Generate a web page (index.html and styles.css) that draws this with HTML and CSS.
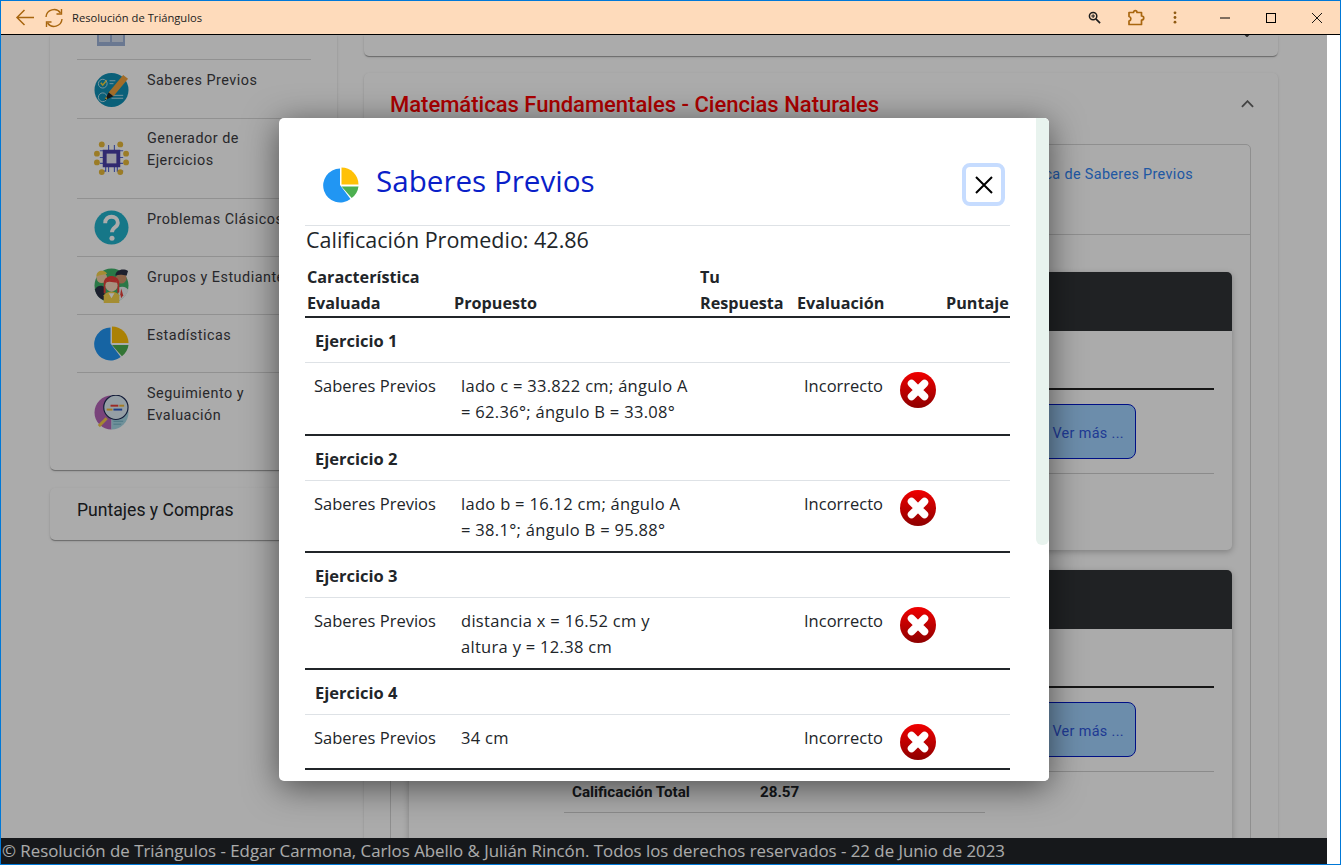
FILE: index.html
```html
<!DOCTYPE html>
<html lang="es">
<head>
<meta charset="utf-8">
<title>Resolución de Triángulos</title>
<link rel="stylesheet" href="styles.css">
</head>
<body>
<div class="window">
  <header class="titlebar">
    <svg class="tb-icon back" viewBox="0 0 20 20"><path d="M19 9.500H2M9.500 2L2 9.500L9.500 17" fill="none" stroke="#a8660f" stroke-width="1.500"/></svg>
    <svg class="tb-icon refresh" viewBox="0 0 20 20"><path d="M2 9A8 8 0 0 1 16.500 5M18 11A8 8 0 0 1 3.500 15" fill="none" stroke="#a8660f" stroke-width="1.400"/><path d="M17.500 1V6H12.500M2.500 19V14H7.500" fill="none" stroke="#a8660f" stroke-width="1.400"/></svg>
    <span class="tb-title">Resolución de Triángulos</span>
    <span class="tb-spacer"></span>
    <svg class="tb-zoom" viewBox="0 0 14 14"><circle cx="5.500" cy="5.500" r="4" fill="none" stroke="#1c1c1c" stroke-width="1.600"/><path d="M8.500 8.500L13 13" stroke="#1c1c1c" stroke-width="1.800"/><path d="M3.500 5.500H7.500M5.500 3.500V7.500" stroke="#1c1c1c" stroke-width="1.100"/></svg>
    <svg class="tb-puzzle" viewBox="0 0 18 18"><path d="M2 3.500H6.500C6.500 1 10 1 10 3.500H14.500V7C17.500 7 17.500 11 14.500 11V15.500H2V12C4.500 11.500 4.500 8 2 7.500Z" fill="none" stroke="#a8660f" stroke-width="1.700" stroke-linejoin="round"/></svg>
    <svg class="tb-dots" viewBox="0 0 4 14"><circle cx="2" cy="2" r="1.500" fill="#8f5a12"/><circle cx="2" cy="7" r="1.500" fill="#8f5a12"/><circle cx="2" cy="12" r="1.500" fill="#8f5a12"/></svg>
    <svg class="tb-min" viewBox="0 0 10 10"><path d="M0 5H10" stroke="#000" stroke-width="1"/></svg>
    <svg class="tb-max" viewBox="0 0 10 10"><rect x=".5" y=".5" width="9" height="9" fill="none" stroke="#000" stroke-width="1"/></svg>
    <svg class="tb-close" viewBox="0 0 10 10"><path d="M0 0L10 10M10 0L0 10" stroke="#000" stroke-width=".9"/></svg>
  </header>

  <div class="viewport">
    <div class="page">
      <div class="columns">
        <aside class="sidebar">
          <section class="side-card">
            <div class="row row-first">
              <svg class="row-icon" viewBox="0 0 30 30"><rect x="1" y="2" width="28" height="26" fill="#9fb3d8"/><rect x="3" y="4" width="11" height="20" fill="#d6dfee"/><rect x="16" y="4" width="11" height="20" fill="#d6dfee"/><path d="M5 8H12M5 12H12M5 16H12M18 8H25M18 12H25M18 16H25" stroke="#8a9dc3"/></svg>
            </div>
            <div class="row row-saberes">
              <svg class="row-icon" viewBox="0 0 36 36"><circle cx="18" cy="18.500" r="17.500" fill="#0f8fb5"/><path d="M7 11l2 2.500 4-5" fill="none" stroke="#f5d33a" stroke-width="1.600"/><circle cx="9" cy="12" r="4.500" fill="none" stroke="#b6e0ea"/><circle cx="9" cy="26" r="4.500" fill="none" stroke="#b6e0ea"/><path d="M17 24H30M18 27H30M16 9H22M16 12H20" stroke="#b6e0ea"/><path d="M15 21L30 3L35 7L20 25Z" fill="#f0a23c"/><path d="M15 21L20 25L11 29Z" fill="#222"/><circle cx="12.500" cy="27" r="1" fill="#f5d33a"/></svg>
              <span class="row-text">Saberes Previos</span>
            </div>
            <div class="row row-two">
              <svg class="row-icon" viewBox="0 0 36 36"><g stroke="#5a6ed6" stroke-width="1.200" fill="none"><path d="M6 10H12V12M6 17H11M6 23H11M6 31H12V26M30 10H24V12M30 17H25M30 23H25M30 31H24V26M15 4V10M21 4V10M15 26V32M21 26V32"/></g><g fill="#e8b93a"><circle cx="8" cy="3.500" r="3"/><circle cx="27" cy="3.500" r="3"/><circle cx="3" cy="13" r="3"/><circle cx="33" cy="13" r="3"/><circle cx="3" cy="22" r="3"/><circle cx="33" cy="22" r="3"/><circle cx="8" cy="32" r="3"/><circle cx="27" cy="32" r="3"/></g><rect x="9" y="9" width="18" height="18" fill="#4a3fa8"/><rect x="13" y="13" width="10" height="10" fill="#e8e8f4"/></svg>
              <span class="row-text">Generador de<br>Ejercicios</span>
            </div>
            <div class="row">
              <svg class="row-icon" viewBox="0 0 36 36"><circle cx="18" cy="18" r="17.500" fill="#22b2cb"/><path d="M11.500 13.500C11.500 4.500 24.500 5 24.500 13C24.500 18 18.500 17.500 18.500 23" fill="none" stroke="#fff" stroke-width="4"/><circle cx="18.500" cy="29" r="2.600" fill="#fff"/></svg>
              <span class="row-text">Problemas Clásicos</span>
            </div>
            <div class="row">
              <svg class="row-icon" viewBox="0 0 36 36"><circle cx="18" cy="18" r="17.500" fill="#3fb36a"/><path d="M1 22C4 17 9 18 11 20V33C6 32 2 28 1 22Z" fill="#2b3145"/><circle cx="8" cy="10" r="5.500" fill="#f7cfa6"/><path d="M2.500 9C2 2 11 1 13.500 6C9 7.500 6 7 2.500 9Z" fill="#f5d24d"/><path d="M25 20C30 18 34 20 35.500 23C33 29 30 32 25 34Z" fill="#eef2f5"/><path d="M28 21L30 28L28 31L27 27Z" fill="#e8403a"/><circle cx="28" cy="10.500" r="5.500" fill="#d0936a"/><path d="M22 8C22 2 30 0 35 3L33.500 8C29 7 26 6.500 22 8Z" fill="#2d3145"/><path d="M10 36V28C14 23 22 23 26 28V36Z" fill="#f5d24d"/><path d="M15 26H21L18 31Z" fill="#fff"/><path d="M10 26V15C11 6 25 6 26 15V25L24 26V16C20 16 15 14 12 16V26Z" fill="#ea3f3a"/><circle cx="18" cy="18" r="6.300" fill="#f9d8bd"/><path d="M12 15C14 10 22 10 24 15C20 15 16 13 12 15Z" fill="#ea3f3a"/></svg>
              <span class="row-text">Grupos y Estudiantes</span>
            </div>
            <div class="row">
              <svg class="row-icon" viewBox="0 0 36 36"><path d="M17 1.500A17 17 0 1 0 27.500 32L17 18Z" fill="#2196f3"/><path d="M18.500 0.500A17 17 0 0 1 35.500 17.500H18.500Z" fill="#ffc107"/><path d="M18.500 19.500H35.500A17 17 0 0 1 28.700 31Z" fill="#4caf50"/></svg>
              <span class="row-text">Estadísticas</span>
            </div>
            <div class="row row-last">
              <svg class="row-icon" viewBox="0 0 36 36"><path d="M18 .500A17.500 17.500 0 0 0 18 35.500Z" fill="#b565b8"/><path d="M18 .500A17.500 17.500 0 0 1 18 35.500Z" fill="#a6d8e6"/><path d="M20 27H30M20 30H28" stroke="#6fb0c4"/><circle cx="22.500" cy="12.700" r="12.500" fill="#dfeef6" stroke="#1c2a55" stroke-width="1.200"/><rect x="17" y="10" width="8" height="2" fill="#e8403a"/><rect x="26" y="10" width="5" height="2" fill="#f5b93a"/><rect x="13" y="14" width="6" height="2" fill="#f5b93a"/><rect x="20" y="14" width="9" height="2" fill="#2f5cc8"/><path d="M5 32L13 24" stroke="#f5c94a" stroke-width="3"/></svg>
              <span class="row-text">Seguimiento y<br>Evaluación</span>
            </div>
          </section>
          <section class="side-card side-single">Puntajes y Compras</section>
        </aside>

        <main class="main">
          <section class="acc acc-top">
            <svg class="acc-chev" viewBox="0 0 14 8"><path d="M1 1L7 7L13 1" fill="none" stroke="#444" stroke-width="2"/></svg>
          </section>
          <section class="acc">
            <div class="acc-head">
              <h2 class="acc-title">Matemáticas Fundamentales - Ciencias Naturales</h2>
              <svg class="acc-chev-up" viewBox="0 0 14 8"><path d="M1 7L7 1L13 7" fill="none" stroke="#666" stroke-width="2"/></svg>
            </div>
            <div class="box">
              <div class="box-tabs"><a class="tab-link">Estadística de Saberes Previos</a></div>
              <div class="box-body">
                <article class="panel">
                  <div class="panel-head"></div>
                  <div class="panel-rule"></div>
                  <div class="panel-action"><button class="more">Ver más ...</button></div>
                  <div class="panel-line"></div>
                  <div class="total"><b>Calificación Total</b><b>28.57</b></div>
                </article>
                <article class="panel">
                  <div class="panel-head"></div>
                  <div class="panel-rule"></div>
                  <div class="panel-action"><button class="more">Ver más ...</button></div>
                  <div class="panel-line"></div>
                  <div class="total"><b>Calificación Total</b><b>28.57</b></div>
                </article>
              </div>
            </div>
          </section>
        </main>
      </div>
      <footer class="footer">© Resolución de Triángulos - Edgar Carmona, Carlos Abello &amp; Julián Rincón. Todos los derechos reservados - 22 de Junio de 2023</footer>

      <div class="backdrop"></div>

      <div class="modal">
        <div class="modal-inner">
          <div class="modal-head">
            <svg class="modal-icon" viewBox="0 0 36 36"><path d="M17 1.500A17 17 0 1 0 27.500 32L17 18Z" fill="#2196f3"/><path d="M18.500 0.500A17 17 0 0 1 35.500 17.500H18.500Z" fill="#ffc107"/><path d="M18.500 19.500H35.500A17 17 0 0 1 28.700 31Z" fill="#4caf50"/></svg>
            <h1 class="modal-title">Saberes Previos</h1>
            <button class="modal-close"><svg viewBox="0 0 18 18"><path d="M1 1L17 17M17 1L1 17" stroke="#000" stroke-width="2"/></svg></button>
          </div>
          <div class="avg">Calificación Promedio: 42.86</div>
          <table class="grades">
            <colgroup><col class="c1"><col class="c2"><col class="c3"><col class="c4"><col class="c5"></colgroup>
            <thead>
              <tr><th>Característica Evaluada</th><th>Propuesto</th><th>Tu Respuesta</th><th>Evaluación</th><th>Puntaje</th></tr>
            </thead>
            <tbody>
              <tr class="ex"><td colspan="5">Ejercicio 1</td></tr>
              <tr class="an"><td>Saberes Previos</td><td>lado c = 33.822 cm; ángulo A = 62.36°; ángulo B = 33.08°</td><td></td><td class="eval">Incorrecto<svg class="bad" viewBox="0 0 36 36"><use href="#x-mark"/></svg></td><td></td></tr>
              <tr class="ex"><td colspan="5">Ejercicio 2</td></tr>
              <tr class="an"><td>Saberes Previos</td><td>lado b = 16.12 cm; ángulo A = 38.1°; ángulo B = 95.88°</td><td></td><td class="eval">Incorrecto<svg class="bad" viewBox="0 0 36 36"><use href="#x-mark"/></svg></td><td></td></tr>
              <tr class="ex"><td colspan="5">Ejercicio 3</td></tr>
              <tr class="an"><td>Saberes Previos</td><td>distancia x = 16.52 cm y altura y = 12.38 cm</td><td></td><td class="eval">Incorrecto<svg class="bad" viewBox="0 0 36 36"><use href="#x-mark"/></svg></td><td></td></tr>
              <tr class="ex"><td colspan="5">Ejercicio 4</td></tr>
              <tr class="an"><td>Saberes Previos</td><td>34 cm</td><td></td><td class="eval">Incorrecto<svg class="bad" viewBox="0 0 36 36"><use href="#x-mark"/></svg></td><td></td></tr>
            </tbody>
          </table>
        </div>
        <div class="modal-scroll"><div class="modal-thumb"></div></div>
      </div>
    </div>
    <div class="gutter"></div>
  </div>
</div>
<svg class="defs" width="0" height="0">
  <defs>
    <linearGradient id="redg" x1="0" y1="0" x2="0" y2="1"><stop offset="0" stop-color="#f00000"/><stop offset="1" stop-color="#8e0000"/></linearGradient>
    <g id="x-mark"><circle cx="18" cy="18" r="18" fill="url(#redg)"/><path d="M11.500 11.500L24.500 24.500M24.500 11.500L11.500 24.500" stroke="#fff" stroke-width="7.500" stroke-linecap="round"/></g>
  </defs>
</svg>
</body>
</html>
```
FILE: styles.css
```css
* { box-sizing: border-box; }
html, body { margin: 0; height: 100%; }
body { font-family: "Roboto", "Liberation Sans", sans-serif; overflow: hidden; background: #fff; }
.defs { display: block; }

.window { width: 1341px; height: 865px; border: 1px solid #0078d7; display: flex; flex-direction: column; background: #fff; overflow: hidden; }

.titlebar { flex: 0 0 34px; display: flex; align-items: center; background: #fedbbb; border-bottom: 1px solid #000; }
.tb-icon { width: 20px; height: 20px; }
.back { margin-left: 14px; }
.refresh { margin-left: 9px; }
.tb-title { margin-left: 8px; font: 11.200px "Open Sans", sans-serif; color: #222; }
.tb-spacer { flex: 1; }
.tb-zoom { width: 13px; height: 13px; margin-right: 26px; }
.tb-puzzle { width: 18px; height: 18px; margin-right: 28px; }
.tb-dots { width: 4px; height: 13px; margin-right: 43px; }
.tb-min { width: 10px; height: 10px; margin-right: 36px; }
.tb-max { width: 10px; height: 10px; margin-right: 36px; }
.tb-close { width: 10px; height: 10px; margin-right: 18px; }

.viewport { flex: 1; min-height: 0; display: flex; }
.page { position: relative; flex: 1; min-width: 0; display: flex; flex-direction: column; }
.gutter { flex: 0 0 13px; background: #fff; }

.columns { flex: 1; min-height: 0; display: flex; overflow: hidden; }
.sidebar { flex: 0 0 336px; padding-left: 49px; display: flex; flex-direction: column; gap: 18px; }
.side-card { background: #fff; border-radius: 0 0 5px 5px; box-shadow: 0 2px 1px -1px rgba(0,0,0,.2), 0 1px 1px rgba(0,0,0,.14), 0 1px 3px rgba(0,0,0,.12); padding: 0 26px 18px 27px; }
.side-single { border-radius: 5px; padding: 0 0 9px 27px; height: 52px; display: flex; align-items: center; font-size: 17.600px; font-weight: 400; color: #212529; }

.row { display: flex; align-items: center; border-bottom: 1px solid #d9d9d9; padding-left: 17px; }
.row-first { height: 25px; align-items: flex-end; overflow: hidden; padding-left: 19px; padding-bottom: 11px; }
.row-first .row-icon { width: 30px; height: 30px; flex: 0 0 30px; margin: 0; }
.row-last { border-bottom: 0; }
.row-icon { flex: 0 0 35px; width: 35px; height: 35px; margin-right: 18px; }
.row-text { align-self: flex-start; padding: 10px 0 25px; font-size: 14.400px; line-height: 22px; letter-spacing: .5px; color: #3c3c42; white-space: nowrap; }
.row-saberes .row-text { padding-bottom: 26px; }
.row-two .row-text { padding: 9px 0 26px; }

.main { flex: 0 0 914px; margin-left: 27px; display: flex; flex-direction: column; gap: 17px; }
.acc { background: #fff; border-radius: 5px; box-shadow: 0 2px 1px -1px rgba(0,0,0,.2), 0 1px 1px rgba(0,0,0,.14), 0 1px 3px rgba(0,0,0,.12); padding: 0 27px 0 26px; }
.acc-top { flex: 0 0 21px; display: flex; justify-content: flex-end; align-items: flex-start; border-radius: 0 0 5px 5px; padding-right: 24px; overflow: hidden; }
.acc-chev { width: 14px; height: 8px; margin-top: -6px; }
.acc-head { height: 71px; padding-bottom: 9px; display: flex; align-items: center; justify-content: space-between; }
.acc-title { margin: 0; font-size: 22px; font-weight: 500; color: #ff0000; }
.acc-chev-up { width: 13px; height: 8px; margin-right: -3px; }

.box { border: 1px solid #d6d6d6; border-radius: 5px 5px 0 0; }
.box-tabs { height: 90px; border-bottom: 1px solid #d6d6d6; display: flex; justify-content: flex-end; padding: 20px 57px 0 0; }
.tab-link { font-size: 14.400px; letter-spacing: .35px; line-height: 20px; color: #2f83f4; }
.box-body { padding: 37px 18px 0 18px; display: flex; flex-direction: column; gap: 20px; }
.panel { height: 278px; flex: 0 0 278px; background: #fff; border-radius: 5px; box-shadow: 0 2px 6px rgba(0,0,0,.25); padding: 0 18px; }
.panel-head { height: 59px; margin: 0 -18px; background: #313336; border-radius: 5px 5px 0 0; }
.panel-rule { height: 2px; margin-top: 57px; background: #222; }
.panel-action { display: flex; justify-content: flex-end; padding: 14px 78px 0 0; }
.more { width: 170px; height: 55px; padding: 3px 11px 0; text-align: right; font: 14.400px "Roboto", sans-serif; letter-spacing: .35px; background: #a2d2ff; color: #2f57dd; border: 1px solid #0018c8; border-radius: 8px; }
.panel-line { height: 1px; margin-top: 14px; background: #cfcfcf; }
.total { margin: 0 229px 0 137px; padding: 10px 8px; height: 41px; display: grid; grid-template-columns: 188px auto; border-bottom: 1px solid #cfcfcf; font-size: 15.200px; line-height: 20px; color: #212529; }

.footer { flex: 0 0 26px; background: #212529; color: #fff; font: 16.840px/26px "Open Sans", sans-serif; padding-left: 1px; white-space: nowrap; }

.backdrop { position: absolute; inset: 0; background: rgba(0,0,0,.33); }
.modal { position: absolute; left: 278px; top: 83px; width: 770px; height: 663px; background: #fff; border-radius: 5px; box-shadow: 0 6px 34px rgba(0,0,0,.55); overflow: hidden; font-family: "Open Sans", sans-serif; color: #212529; }
.modal-inner { padding: 0 39px 0 26px; }
.modal-head { height: 108px; display: flex; align-items: center; border-bottom: 1px solid #dee2e6; padding: 19px 5px 0 18px; }
.modal-icon { width: 36px; height: 36px; margin-top: 7px; }
.modal-title { margin: -1px 0 0 17px; flex: 1; font-size: 29.600px; font-weight: 500; color: #0a1fc8; }
.modal-close { width: 43px; height: 43px; margin-top: 7px; padding: 0; border: 4px solid #c6dcff; border-radius: 8px; background: #fff; display: flex; align-items: center; justify-content: center; }
.modal-close svg { width: 18px; height: 18px; }
.avg { font-size: 21.500px; line-height: 28px; height: 38px; padding-left: 1px; }

.grades { width: 705px; table-layout: fixed; border-collapse: collapse; font-size: 16.500px; line-height: 26px; }
.c1 { width: 147px; } .c2 { width: 246px; } .c3 { width: 97px; } .c4 { width: 149px; } .c5 { width: 66px; }
.grades th { padding: 0 2px; text-align: left; vertical-align: bottom; font-size: 16.200px; font-weight: 700; line-height: 26px; border-bottom: 2px solid #212529; }
.grades th:last-child { text-align: right; }
.ex td { height: 44px; padding: 10px 9px 8px 10px; font-weight: 700; border-bottom: 1px solid #dee2e6; }
.an td { padding: 10px 9px 8px; vertical-align: top; border-bottom: 2px solid #212529; }
.ex:first-child + .an td { padding-bottom: 9px; }
.an td:nth-child(2) { letter-spacing: .3px; }
.eval { white-space: nowrap; }
.bad { width: 36px; height: 36px; margin: -1px 0 0 17px; vertical-align: top; }

.modal-scroll { position: absolute; top: 0; right: 0; bottom: 0; width: 13px; background: #fff; }
.modal-thumb { height: 427px; background: #e8f3ee; border-radius: 0 5px 6px 6px; }
```
